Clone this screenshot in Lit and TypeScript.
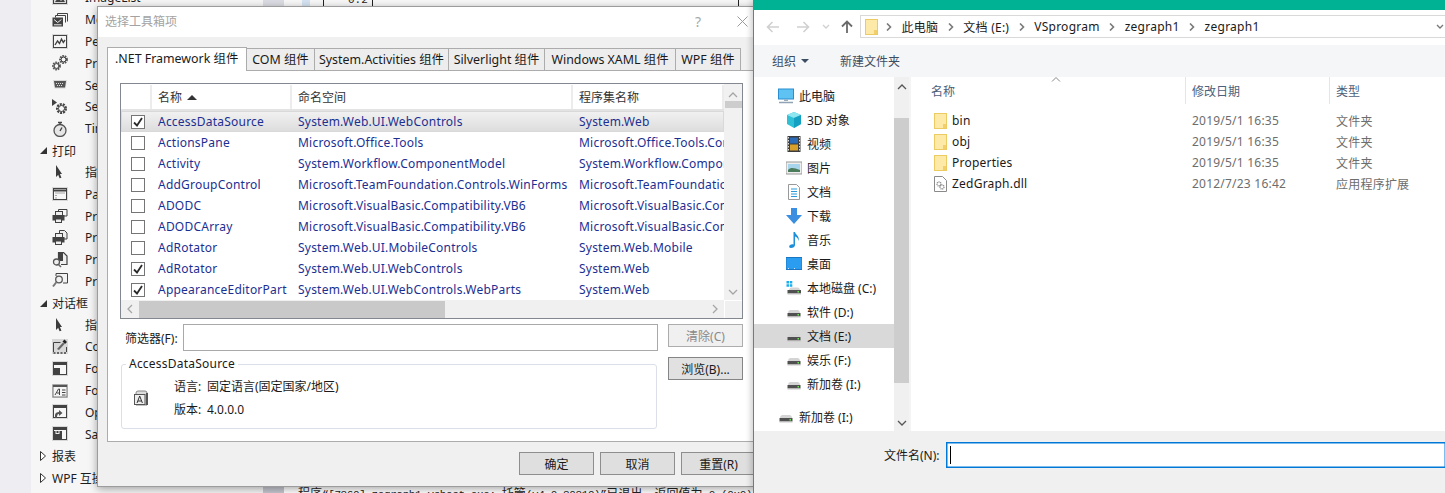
import { LitElement, html, svg, css } from "lit";
import { customElement } from "lit/decorators.js";

const D = "#424242";

const tb: Record<string, () => unknown> = {
  img: () => html`<svg class="ic" width="16" height="16" viewBox="0 0 16 16"><rect width="16" height="14" y="1" fill="#d8d8d8"/><rect x="1.5" y="2.5" width="13" height="11" fill="none" stroke="${D}"/><path d="M3 12l3-4 3 3 2-2 2 3z" fill="${D}"/></svg>`,
  msg: () => html`<svg class="ic" width="16" height="16" viewBox="0 0 16 16"><path d="M5.5 3.500V1.500h10v8M3.500 5.500V3.500h10v7" fill="none" stroke="${D}"/><rect x="0.500" y="5.500" width="10.500" height="9" fill="${D}"/><path d="M2 7.500l3.700 3 3.700-3M2 12.800h7.500" fill="none" stroke="#f0f0f0"/></svg>`,
  perf: () => html`<svg class="ic" width="16" height="16" viewBox="0 0 16 16"><rect width="16" height="15" fill="#d8d8d8"/><rect x="1.500" y="1.500" width="13" height="12" fill="#f5f5f5" stroke="${D}"/><path d="M3 11l2.500-4 2 2.500 2-4.500 1.800 3.500L13 6" fill="none" stroke="${D}" stroke-width="1.400"/></svg>`,
  gears: () => html`<svg class="ic" width="16" height="16" viewBox="0 0 16 16"><circle cx="4.500" cy="11" r="3.400" fill="none" stroke="#555" stroke-width="2" stroke-dasharray="1.600 .8"/><circle cx="4.500" cy="11" r="2.400" fill="none" stroke="${D}"/><circle cx="11.500" cy="4.500" r="3.400" fill="none" stroke="#555" stroke-width="2" stroke-dasharray="1.600 .8"/><circle cx="11.500" cy="4.500" r="2.400" fill="none" stroke="${D}"/></svg>`,
  serial: () => html`<svg class="ic" width="16" height="16" viewBox="0 0 16 16"><path d="M1 3h14l-1.500 8.500h-11z" fill="#d8d8d8"/><path d="M2 4h12l-1 6.500H3z" fill="#555"/><path d="M4 6.500h8M5 8.500h6" stroke="#ddd" stroke-dasharray="1 1"/></svg>`,
  svc: () => html`<svg class="ic" width="16" height="16" viewBox="0 0 16 16"><path d="M0 0l5 3.500L0 7z" fill="${D}"/><circle cx="9.500" cy="9.500" r="4.300" fill="none" stroke="#444" stroke-width="2.400" stroke-dasharray="2 1"/><circle cx="9.500" cy="9.500" r="3" fill="none" stroke="#444"/></svg>`,
  timer: () => html`<svg class="ic" width="16" height="16" viewBox="0 0 16 16"><circle cx="8" cy="9.500" r="6" fill="#e6e6e6" stroke="#555" stroke-width="1.300"/><path d="M6 1.500h4M8 2v2M8 10l2-3.500" stroke="#444" stroke-width="1.400" fill="none"/></svg>`,
  ptr: () => html`<svg class="ic" width="16" height="16" viewBox="0 0 16 16"><path d="M4 1v12l3-3 3 0z" fill="#3c3c3c"/><path d="M6.500 9l2 5" stroke="#3c3c3c" stroke-width="2"/></svg>`,
  page: () => html`<svg class="ic" width="16" height="16" viewBox="0 0 16 16"><rect width="16" height="14" y="1" fill="#d8d8d8"/><rect x="1.500" y="2.500" width="13" height="11" fill="#f6f6f6" stroke="${D}"/><path d="M2 4.500h12" stroke="${D}" stroke-width="2"/><path d="M3.500 7h9M3.500 9.500h1M3.500 12h1" stroke="#555" stroke-dasharray="1 1"/></svg>`,
  pr1: () => html`<svg class="ic" width="16" height="16" viewBox="0 0 16 16"><path d="M6.500 4V1.500h8.500V8H12" fill="none" stroke="${D}"/><rect x="3.500" y="3.500" width="7" height="4" fill="#eee" stroke="${D}"/><rect x="0.500" y="7" width="12" height="5.500" fill="${D}"/><rect x="3.500" y="11" width="6" height="3.500" fill="#eee" stroke="${D}"/></svg>`,
  pr2: () => html`<svg class="ic" width="16" height="16" viewBox="0 0 16 16"><path d="M7.500 4V.5h5l2.500 2.500V9h-3" fill="#eee" stroke="${D}"/><rect x="3.500" y="3.500" width="7" height="4" fill="#eee" stroke="${D}"/><rect x="0.500" y="7" width="12" height="5.500" fill="${D}"/><rect x="3.500" y="11" width="6" height="3.500" fill="#eee" stroke="${D}"/></svg>`,
  pr3: () => html`<svg class="ic" width="16" height="16" viewBox="0 0 16 16"><path d="M6.500 8V.5h5l3.500 3.500v8.500H9" fill="#eee" stroke="${D}" stroke-width="1.200"/><path d="M7 1h4v8H7z" fill="${D}"/><circle cx="4.500" cy="10" r="3" fill="#eee" stroke="#555" stroke-width="1.300"/><path d="M6.500 12.500l2.500 2.500" stroke="#666" stroke-width="1.600"/></svg>`,
  pr4: () => html`<svg class="ic" width="16" height="16" viewBox="0 0 16 16"><path d="M4 3V.5h11.500V10H11" fill="#f2f2f2" stroke="${D}"/><circle cx="7" cy="6.500" r="3.300" fill="#f2f2f2" stroke="#555" stroke-width="1.300"/><path d="M4.500 9L1 13.500" stroke="#777" stroke-width="2"/></svg>`,
  color: () => html`<svg class="ic" width="16" height="16" viewBox="0 0 16 16"><rect width="16" height="15" fill="#d8d8d8"/><path d="M1.500 13V3.500h7M14.500 8v5" fill="none" stroke="${D}"/><path d="M1.500 14h13" stroke="${D}" stroke-width="1.500" stroke-dasharray="2 1.500"/><path d="M5 10l6-6.500L12.500 5 7 11z" fill="#666"/><path d="M10.500 2.500l2-2 2.500 2.500-2 2z" fill="#222"/></svg>`,
  folder: () => html`<svg class="ic" width="16" height="16" viewBox="0 0 16 16"><rect width="16" height="15" fill="#d8d8d8"/><rect x="1.500" y="1.500" width="13" height="12" fill="#f7f7f7" stroke="${D}"/><path d="M1 2h14v2H1zM1 7h7v7H1z" fill="${D}"/></svg>`,
  font: () => html`<svg class="ic" width="16" height="16" viewBox="0 0 16 16"><rect width="16" height="14" y="1" fill="#d8d8d8"/><rect x="1" y="2" width="14" height="12" fill="#f5f5f5" stroke="#777"/><path d="M1 2h14v2H1z" fill="#555"/><path d="M3 12l3.500-6h1v6M5 10h3M10 7h3.500M10 9.500h3.500M10 12h3.500" fill="none" stroke="${D}"/></svg>`,
  open: () => html`<svg class="ic" width="16" height="16" viewBox="0 0 16 16"><rect width="16" height="15" fill="#d8d8d8"/><rect x="1.500" y="1.500" width="13" height="12" fill="#f7f7f7" stroke="${D}"/><path d="M1 2h14v2H1z" fill="${D}"/><path d="M3 14v-3c0-2 2-3 4-3V6l3.500 3L7 12v-2c-1 0-2 .5-2 4z" fill="#555"/></svg>`,
  save: () => html`<svg class="ic" width="16" height="16" viewBox="0 0 16 16"><rect width="16" height="15" fill="#d8d8d8"/><rect x="1.500" y="1.500" width="13" height="12" fill="#f7f7f7" stroke="${D}"/><path d="M1 2h14v2H1z" fill="${D}"/><path d="M1 5h9v9H1z" fill="${D}"/><path d="M3.500 5h1v2h2V5h1v3h-4z" fill="#eee"/></svg>`,
};

const toolbox: [string, string, string?][] = [
  ["i", "ImageList", "img"], ["i", "MessageQueue", "msg"], ["i", "PerformanceCounter", "perf"], ["i", "Process", "gears"],
  ["i", "SerialPort", "serial"], ["i", "ServiceController", "svc"], ["i", "Timer", "timer"],
  ["o", "打印"], ["i", "指针", "ptr"], ["i", "PageSetupDialog", "page"], ["i", "PrintDialog", "pr1"], ["i", "PrintDocument", "pr2"],
  ["i", "PrintPreviewControl", "pr3"], ["i", "PrintPreviewDialog", "pr4"],
  ["o", "对话框"], ["i", "指针", "ptr"], ["i", "ColorDialog", "color"], ["i", "FolderBrowserDialog", "folder"], ["i", "FontDialog", "font"],
  ["i", "OpenFileDialog", "open"], ["i", "SaveFileDialog", "save"],
  ["c", "报表"], ["c", "WPF 互操作性"],
];

const tabs = [".NET Framework 组件", "COM 组件", "System.Activities 组件", "Silverlight 组件", "Windows XAML 组件", "WPF 组件"];

const rows: [boolean, string, string, string][] = [
  [true, "AccessDataSource", "System.Web.UI.WebControls", "System.Web"],
  [false, "ActionsPane", "Microsoft.Office.Tools", "Microsoft.Office.Tools.Common"],
  [false, "Activity", "System.Workflow.ComponentModel", "System.Workflow.ComponentModel"],
  [false, "AddGroupControl", "Microsoft.TeamFoundation.Controls.WinForms", "Microsoft.TeamFoundation.Controls"],
  [false, "ADODC", "Microsoft.VisualBasic.Compatibility.VB6", "Microsoft.VisualBasic.Compatibility"],
  [false, "ADODCArray", "Microsoft.VisualBasic.Compatibility.VB6", "Microsoft.VisualBasic.Compatibility"],
  [false, "AdRotator", "System.Web.UI.MobileControls", "System.Web.Mobile"],
  [true, "AdRotator", "System.Web.UI.WebControls", "System.Web"],
  [true, "AppearanceEditorPart", "System.Web.UI.WebControls.WebParts", "System.Web"],
];

const drive = () => html`<svg class="ic" width="16" height="16" viewBox="0 0 16 16"><path d="M2 9q0-2.500 2-3h8q2 .5 2 3z" fill="#d4d4d4"/><rect x="1.500" y="9" width="13" height="3.500" fill="#505050"/><rect x="1.500" y="12.500" width="13" height="1" fill="#c8c8c8"/><rect x="11.500" y="10" width="1.500" height="1.500" fill="#6fe05a"/></svg>`;
const cdrive = () => html`<svg class="ic" width="16" height="16" viewBox="0 0 16 16"><path d="M.5 1h2.500v2.500H.5zM3.800 1h2.500v2.500H3.800zM.5 4.300h2.500v2.500H.5zM3.800 4.300h2.500v2.500H3.800z" fill="#19aef0"/><path d="M3 10q0-2 2-2.500h7q2 .5 2 2.500z" fill="#d4d4d4"/><rect x="1.500" y="10" width="13.500" height="3.500" fill="#505050"/><rect x="1.500" y="13.500" width="13.500" height="1" fill="#c8c8c8"/><rect x="11.500" y="11" width="1.500" height="1.500" fill="#6fe05a"/></svg>`;

const nav: [string, () => unknown, boolean?, boolean?][] = [
  ["此电脑", () => html`<svg class="ic" width="16" height="16" viewBox="0 0 16 16"><rect x=".5" y="1" width="15" height="10" fill="#5ec3f2" stroke="#2a8ed0"/><path d="M6 11.500h4v1.500H6z" fill="#9ab"/><path d="M1 14.500h14" stroke="#8fa3b5" stroke-width="1.500"/></svg>`, true],
  ["3D 对象", () => html`<svg class="ic" width="16" height="16" viewBox="0 0 16 16"><path d="M8 0l7 3v9l-7 4-7-4V3z" fill="#2fc0d6"/><path d="M8 0l7 3-7 3-7-3z" fill="#8fe6f0"/><path d="M8 6v10l7-4V3z" fill="#13a0c2"/></svg>`],
  ["视频", () => html`<svg class="ic" width="16" height="16" viewBox="0 0 16 16"><rect x="1.500" width="13" height="16" fill="#3d3d3d"/><rect x="4" y="1.500" width="8" height="6" fill="#2c6bb8"/><rect x="4" y="8.500" width="8" height="6" fill="#d9a02c"/><path d="M2.500 1v14M13.500 1v14" stroke="#ddd" stroke-dasharray="1.500 1.500"/></svg>`],
  ["图片", () => html`<svg class="ic" width="16" height="16" viewBox="0 0 16 16"><rect y="2" width="16" height="12" fill="#eee" stroke="#999"/><rect x="2" y="4" width="12" height="8" fill="#a8d4ec"/><path d="M2 10c3-3 6-2 12 0v2H2z" fill="#4d7c5c"/></svg>`],
  ["文档", () => html`<svg class="ic" width="16" height="16" viewBox="0 0 16 16"><path d="M2.500 .5h8l3 3v12h-11z" fill="#fff" stroke="#999"/><path d="M5 5h6M5 7.500h6M5 10h6M5 12.500h6" stroke="#2a9ad8"/></svg>`],
  ["下载", () => html`<svg class="ic" width="16" height="16" viewBox="0 0 16 16"><path d="M5 0h6v7h5l-8 9-8-9h5z" fill="#3a8fe0"/></svg>`],
  ["音乐", () => html`<svg class="ic" width="16" height="16" viewBox="0 0 16 16"><path d="M7.500 0h1.500c.5 3 5 4 3.500 9-.5-3-2-4-3.500-4.500V13c0 2-2 3-4 3s-2.500-2-1-3 2.500-1 3.500-.5z" fill="#1c8fd8"/></svg>`],
  ["桌面", () => html`<svg class="ic" width="16" height="16" viewBox="0 0 16 16"><rect y="1.500" width="16" height="12" fill="#2b9df0" stroke="#1a76c2"/><path d="M2 12.500h12" stroke="#cde" stroke-dasharray="1 5"/></svg>`],
  ["本地磁盘 (C:)", cdrive], ["软件 (D:)", drive], ["文档 (E:)", drive, false, true], ["娱乐 (F:)", drive], ["新加卷 (I:)", drive],
];

const files: [string, string, string, boolean][] = [
  ["bin", "2019/5/1 16:35", "文件夹", true],
  ["obj", "2019/5/1 16:35", "文件夹", true],
  ["Properties", "2019/5/1 16:35", "文件夹", true],
  ["ZedGraph.dll", "2012/7/23 16:42", "应用程序扩展", false],
];

const folderIc = () => html`<svg class="ic" width="13" height="16" viewBox="0 0 13 16"><rect x=".5" y=".5" width="12" height="15" fill="#fde9a8" stroke="#eccb62"/><rect x="9" y="11" width="3" height="4" fill="#f3cf6c"/></svg>`;
const dllIc = () => html`<svg class="ic" width="13" height="16" viewBox="0 0 13 16"><path d="M.5 .5h8l4 4v11H.5z" fill="#fff" stroke="#8a8a8a"/><circle cx="5" cy="8" r="2" fill="none" stroke="#888" stroke-width="1.300" stroke-dasharray="1 .6"/><circle cx="8" cy="11" r="2" fill="none" stroke="#888" stroke-width="1.300" stroke-dasharray="1 .6"/></svg>`;
const crumb = () => html`<svg class="crumb" width="6" height="8" viewBox="0 0 6 8"><path d="M1 .5L4.500 4 1 7.500" fill="none" stroke="#7a7a7a" stroke-width="1.600"/></svg>`;
const chev = (d: string, c = "#a6a6a6") => html`<svg class="ic" width="10" height="8" viewBox="0 0 10 8"><path d=${d} fill="none" stroke=${c} stroke-width="1.300"/></svg>`;

@customElement("tool-box")
class ToolBox extends LitElement {
  static styles = css`
    :host { display: block; font: 12px "Noto Sans", "Noto Sans CJK SC", sans-serif; color: #1e1e1e; }
    .col { display: flex; flex-direction: column; margin-top: -13px; }
    .row { display: flex; align-items: center; height: 21.82px; white-space: nowrap; padding-left: 21px; }
    .ic { flex: none; margin-right: 17px; }
    .hdr { padding-left: 9px; }
    .tri { width: 12px; flex: none; display: flex; }
  `;
  render() {
    return html`<div class="col">${toolbox.map(([k, t, ic]) =>
      k === "i"
        ? html`<div class="row">${tb[ic!]()}<span>${t}</span></div>`
        : html`<div class="row hdr"><span class="tri">${k === "o"
            ? html`<svg width="7" height="7" viewBox="0 0 7 7"><path d="M7 0v7H0z" fill="#333"/></svg>`
            : html`<svg width="6" height="10" viewBox="0 0 6 10"><path d="M.5 .5l5 4.500-5 4.500z" fill="#fff" stroke="#333"/></svg>`}</span><span>${t}</span></div>`
    )}</div>`;
  }
}

@customElement("tool-dialog")
class ToolDialog extends LitElement {
  static styles = css`
    :host { display: flex; flex-direction: column; box-sizing: border-box; width: 657px; height: 481px; background: #f0f0f0; border: 1px solid #9c9c9c;
      box-shadow: 0 2px 8px rgba(0,0,0,.35); font: 12px "Noto Sans", "Noto Sans CJK SC", sans-serif; color: #1a1a1a; overflow: hidden; }
    * { box-sizing: border-box; }
    .title { height: 30px; flex: none; background: #fff; display: flex; align-items: center; padding: 0 0 2px 7px; color: #a3a3a3; font-size: 12px; }
    .title .t { flex: 1; }
    .q { color: #a8a8a8; font-size: 14px; margin-right: 36px; }
    .x { margin-right: 5px; }
    .tabs { height: 33px; flex: none; display: flex; align-items: flex-end; padding-left: 9px; }
    .tab { height: 22px; border: 1px solid #acacac; border-bottom: 0; border-left-width: 0; background: #ededed; display: flex; align-items: center; justify-content: center; white-space: nowrap; font-size: 12.4px; padding-bottom: 1px; }
    .tab.on { height: 24px; background: #fff; border-left-width: 1px; position: relative; top: 1px; justify-content: flex-start; padding: 0 0 4px 7px; z-index: 1; }
    .panel { height: 372px; flex: none; width: 655px; background: #fff; border: 1px solid #acacac; border-right: 0; margin-left: 9px; padding: 12px 0 0 12px; }
    .list { width: 623px; height: 236px; border: 1px solid #828790; display: grid; grid-template-columns: 603px 18px; grid-template-rows: 1fr 18px; }
    .grid { overflow: hidden; }
    .r { display: grid; grid-template-columns: 31px 140px 281px 151px; height: 21px; align-items: center; white-space: nowrap; color: #1b2f92; letter-spacing: .22px; }
    .r > span { overflow: hidden; padding-left: 6px; }
    .head { height: 26px; margin-top: 1px; color: #333; border-bottom: 2px solid #e3e3e3; align-items: stretch; letter-spacing: 0; }
    .head > span { display: flex; align-items: center; border-right: 2px solid #ececec; }
    .head > span:first-child { padding: 0; }
    .sort { margin-left: 5px; }
    .sel { background: linear-gradient(#f2f2f2, #dcdcdc); box-shadow: inset 0 0 0 1px #d9d9d9; }
    .r > .cb { display: flex; justify-content: center; padding-left: 3px; }
    .box { width: 14px; height: 14px; background: #fff; border: 1px solid #757575; display: block; flex: none; }
    .vs { background: #f1f1f1; display: flex; flex-direction: column; align-items: center; }
    .vs .up { height: 17px; padding-top: 7px; display: flex; }
    .vs .th { width: 17px; height: 7px; background: #cdcdcd; }
    .vs .fill { flex: 1; }
    .vs .dn { padding-bottom: 4px; display: flex; }
    .hs { background: #f0f0f0; display: flex; align-items: center; }
    .hs .l { width: 18px; display: flex; justify-content: center; }
    .hs .th { width: 306px; height: 17px; background: #c9c9c9; }
    .hs .m { flex: 1; }
    .hs .rr { width: 18px; display: flex; justify-content: center; }
    .corner { background: #f0f0f0; border-left: 1px solid #fff; border-top: 1px solid #fff; }
    .bot { display: flex; gap: 10px; margin-top: 5px; }
    .left { width: 538px; }
    .filter { display: flex; align-items: center; height: 27px; padding-left: 5px; }
    .filter label { width: 58px; flex: none; }
    .inp { flex: 1; height: 27px; border: 1px solid #a9a9a9; background: #fff; }
    fieldset { margin: 5px 0 0 1px; padding: 0; width: 536px; height: 73px; border: 1px solid #dbe0e8; border-radius: 3px; min-width: 0; }
    legend { margin-left: 4px; padding: 0 3px; line-height: 16px; letter-spacing: .22px; }
    .fs { display: flex; width: 100%; align-items: flex-start; }
    .fs .ai { margin: 18px 0 0 11px; flex: none; }
    .info { margin: 7px 0 0 25px; display: grid; grid-template-columns: 33px auto; row-gap: 7px; line-height: 16px; justify-content: start; align-content: start; }
    .btn { width: 75px; height: 23px; background: #e1e1e1; border: 1px solid #858585; display: flex; align-items: center; justify-content: center; }
    .btn.off { background: #f0f0f0; border-color: #adadad; color: #8a8a8a; }
    .right { display: flex; flex-direction: column; gap: 10px; }
    .foot { display: flex; gap: 6px; padding: 10px 0 0 421px; }
    .foot .btn { flex: none; border-color: #8e8e8e; background: #dfdfdf; }
  `;
  render() {
    const ws = [140, 68, 134, 96, 131, 65];
    return html`
      <div class="title"><span class="t">选择工具箱项</span><span class="q">?</span>
        <svg class="x" width="11" height="11" viewBox="0 0 11 11"><path d="M.5 .5l10 10M10.500 .5l-10 10" stroke="#9a9a9a" fill="none"/></svg></div>
      <div class="tabs">${tabs.map((t, i) => html`<div class="tab ${i === 0 ? "on" : ""}" style="width:${ws[i]}px">${t}</div>`)}</div>
      <div class="panel">
        <div class="list">
          <div class="grid">
            <div class="r head"><span></span><span>名称<svg class="sort" width="10" height="5" viewBox="0 0 10 5"><path d="M5 0l5 5H0z" fill="#333"/></svg></span><span>命名空间</span><span>程序集名称</span></div>
            ${rows.map((r, i) => html`<div class="r ${i === 0 ? "sel" : ""}">
              <span class="cb"><svg class="box" width="14" height="14" viewBox="0 0 12 12">${r[0] ? svg`<path d="M2 6.500l3 3L10 2" fill="none" stroke="#2a2a2a" stroke-width="1.800"/>` : ""}</svg></span>
              <span>${r[1]}</span><span>${r[2]}</span><span>${r[3]}</span></div>`)}
          </div>
          <div class="vs"><div class="up">${chev("M1 6l4-4 4 4")}</div><div class="th"></div><div class="fill"></div><div class="dn">${chev("M1 2l4 4 4-4")}</div></div>
          <div class="hs"><div class="l"><svg width="6" height="10" viewBox="0 0 6 10"><path d="M5 1L1 5l4 4" fill="none" stroke="#a6a6a6" stroke-width="1.300"/></svg></div><div class="th"></div><div class="m"></div>
            <div class="rr"><svg width="6" height="10" viewBox="0 0 6 10"><path d="M1 1l4 4-4 4" fill="none" stroke="#a6a6a6" stroke-width="1.300"/></svg></div></div>
          <div class="corner"></div>
        </div>
        <div class="bot">
          <div class="left">
            <div class="filter"><label>筛选器(F):</label><div class="inp"></div></div>
            <fieldset><legend>AccessDataSource</legend>
              <div class="fs">
                <svg class="ai" width="16" height="16" viewBox="0 0 16 16"><path d="M3 3q0-2 2-2h7q2 0 2 2v12H3z" fill="#ddd" stroke="#888"/><rect x="1.500" y="4.500" width="10.500" height="10" fill="#eee" stroke="#555"/><path d="M4 13l2.700-7 2.700 7M5 11h3.500" fill="none" stroke="#333"/><rect x="13" y="3" width="2" height="12" fill="#555"/></svg>
                <div class="info"><span>语言:</span><span>固定语言(固定国家/地区)</span><span>版本:</span><span>4.0.0.0</span></div>
              </div>
            </fieldset>
          </div>
          <div class="right"><div class="btn off">清除(C)</div><div class="btn">浏览(B)...</div></div>
        </div>
      </div>
      <div class="foot"><div class="btn">确定</div><div class="btn">取消</div><div class="btn">重置(R)</div></div>`;
  }
}

@customElement("file-window")
class FileWindow extends LitElement {
  static styles = css`
    :host { display: flex; flex-direction: column; box-sizing: border-box; width: 692px; height: 493px; background: #fff; border-left: 1px solid #00b294;
      font: 12px "Noto Sans", "Noto Sans CJK SC", sans-serif; color: #1a1a1a; }
    * { box-sizing: border-box; }
    .bar { height: 10px; background: #00b294; flex: none; }
    .navrow { height: 35px; flex: none; display: flex; align-items: center; padding: 0 0 2px 12px; }
    .a { display: flex; flex: none; }
    .a1 { width: 30px; } .a2 { width: 26px; } .a3 { width: 19px; } .a4 { width: 19px; }
    .addr { height: 23px; flex: 1; min-width: 0; border: 1px solid #d9d9d9; border-right: 0; display: flex; align-items: center; padding-left: 4px; letter-spacing: .25px; }
    .addr .ic { margin-right: 8px; flex: none; }
    .addr span { margin: 0 9.500px; white-space: nowrap; }
    .crumb { flex: none; }
    .addr .end { margin-left: auto; margin-right: 1px; }
    .tools { height: 32px; flex: none; background: #f5f6f7; display: flex; align-items: center; padding-left: 18px; color: #3c4d63; }
    .tools .c { margin: 0 31px 0 5px; }
    .main { height: 354px; flex: none; display: flex; }
    .nav { width: 140px; flex: none; padding-top: 7px; }
    .n { display: flex; align-items: center; height: 24px; padding-left: 32px; white-space: nowrap; }
    .n .ic { margin-right: 5px; flex: none; }
    .n.top { padding-left: 24px; }
    .n.on { background: #d9d9d9; }
    .n.gap { margin-top: 9px; }
    .sb { width: 15px; flex: none; background: #f0f0f0; display: flex; flex-direction: column; align-items: center; }
    .sb .up { height: 41px; display: flex; padding-top: 6px; }
    .sb .th { height: 265px; width: 15px; background: #cdcdcd; flex: none; }
    .sb .dn { flex: 1; display: flex; align-items: flex-end; padding-bottom: 4px; }
    .div { width: 3px; flex: none; background: #f4f4f4; border-right: 1px solid #fff; }
    .files { flex: 1; display: flex; flex-direction: column; position: relative; }
    .cols { display: grid; grid-template-columns: 273px 144px 1fr; }
    .fh { height: 27px; color: #4c607a; align-items: center; }
    .fh span { height: 27px; display: flex; align-items: center; padding-left: 6px; border-left: 1px solid #e5e5e5; }
    .fh span:first-child { border: 0; padding-left: 19px; }
    .list { padding-top: 6px; }
    .fr { height: 21px; align-items: center; color: #6d6d6d; letter-spacing: .22px; }
    .fr span { padding-left: 7px; white-space: nowrap; }
    .fr .nm { display: flex; align-items: center; padding-left: 22px; color: #1a1a1a; }
    .fr .nm .ic { margin-right: 5px; }
    .caret { position: absolute; left: 139px; top: 0; }
    .foot { flex: 1; background: #f0f0f0; display: flex; align-items: flex-start; padding: 11px 0 0 130px; }
    .foot label { width: 62px; flex: none; padding-top: 4px; white-space: nowrap; }
    .finp { flex: 1; height: 26px; background: #fff; border: 1px solid #0078d7; border-right: 0; box-shadow: inset 0 0 0 .5px #0078d7; padding: 3px 0 0 3px; }
    .cur { width: 1px; height: 18px; background: #000; }
  `;
  render() {
    const crumbs = ["此电脑", "文档 (E:)", "VSprogram", "zegraph1", "zegraph1"];
    return html`
      <div class="bar"></div>
      <div class="navrow">
        <span class="a a1"><svg width="14" height="12" viewBox="0 0 14 12"><path d="M13 6H2M6.500 1L1.500 6l5 5" fill="none" stroke="#d0d0d0" stroke-width="1.600"/></svg></span>
        <span class="a a2"><svg width="14" height="12" viewBox="0 0 14 12"><path d="M1 6h11M7.500 1l5 5-5 5" fill="none" stroke="#d0d0d0" stroke-width="1.600"/></svg></span>
        <span class="a a3"><svg width="8" height="6" viewBox="0 0 8 6"><path d="M1 1l3 3 3-3" fill="none" stroke="#d0d0d0" stroke-width="1.300"/></svg></span>
        <span class="a a4"><svg width="12" height="13" viewBox="0 0 12 13"><path d="M6 13V2M1 6.500L6 1.500l5 5" fill="none" stroke="#6a6a6a" stroke-width="1.800"/></svg></span>
        <div class="addr">${folderIc()}
          ${crumbs.map((c) => html`${crumb()}<span>${c}</span>`)}
          <svg class="end" width="8" height="6" viewBox="0 0 8 6"><path d="M1 1l3 3 3-3" fill="none" stroke="#777" stroke-width="1.300"/></svg>
        </div>
      </div>
      <div class="tools"><span>组织</span><svg class="c" width="8" height="4" viewBox="0 0 8 4"><path d="M0 0h8L4 4z" fill="#3c4d63"/></svg><span>新建文件夹</span></div>
      <div class="main">
        <div class="nav">${nav.map(([t, ic, top, on]) => html`<div class="n ${top ? "top" : ""} ${on ? "on" : ""}">${ic()}<span>${t}</span></div>`)}
          <div class="n top gap">${drive()}<span>新加卷 (I:)</span></div></div>
        <div class="sb"><div class="up">${chev("M1 6l4-4 4 4", "#555")}</div><div class="th"></div><div class="dn">${chev("M1 2l4 4 4-4", "#555")}</div></div>
        <div class="div"></div>
        <div class="files">
          <svg class="caret" width="10" height="5" viewBox="0 0 10 5"><path d="M1 4.500l4-4 4 4" fill="none" stroke="#888"/></svg>
          <div class="cols fh"><span>名称</span><span>修改日期</span><span>类型</span></div>
          <div class="list">${files.map(([n, d, t, f]) => html`<div class="cols fr"><span class="nm">${f ? folderIc() : dllIc()}${n}</span><span>${d}</span><span>${t}</span></div>`)}</div>
        </div>
      </div>
      <div class="foot"><label>文件名(N):</label><div class="finp"><div class="cur"></div></div></div>`;
  }
}

@customElement("app-root")
class AppRoot extends LitElement {
  static styles = css`
    :host { display: block; position: relative; width: 1445px; height: 493px; overflow: hidden; background: #f5f5f5; }
    * { box-sizing: border-box; }
    .back { position: absolute; inset: 0; display: flex; }
    .gut { width: 31px; background: #eeeef2; flex: none; }
    .tb { width: 232px; flex: none; background: #f6f6f6; overflow: hidden; }
    .split { width: 21px; background: linear-gradient(#dcdce4 0 8px, #f0f0f0 8px 480px, #c6c6d0 480px); flex: none; }
    .code { flex: 1; background: #fff; position: relative; overflow: hidden; }
    .chart { display: flex; height: 6px; background: #f8f8f8; align-items: flex-start; position: relative; }
    .blue { margin-left: 18px; width: 8px; height: 6px; background: #d5e3f2; }
    .chart .v { width: 1px; height: 6px; background: #222; }
    .v1 { margin-left: 13px; }
    .zero { font: 11px "Liberation Mono", monospace; color: #222; margin: -6px 0 0 24px; width: 24px; }
    .v2 { margin-left: 365px; }
    .v3 { margin-left: 14px; background: #888 !important; }
    .out { position: absolute; left: 14px; top: 484px; white-space: nowrap; font: 11px "Liberation Mono", monospace; letter-spacing: -.4px; color: #222; }
    .out b { font: 12px "Noto Sans CJK SC", sans-serif; letter-spacing: 0; }
    .dlg { position: absolute; left: 97px; top: 6px; }
    .fw { position: absolute; left: 753px; top: 0; box-shadow: -2px 0 6px rgba(0,0,0,.2); }
  `;
  render() {
    return html`
      <div class="back">
        <div class="gut"></div>
        <div class="tb"><tool-box></tool-box></div>
        <div class="split"></div>
        <div class="code">
          <div class="chart"><div class="blue"></div><div class="v v1"></div><div class="zero">0.2</div><div class="v"></div><div class="v v2"></div><div class="v v3"></div></div>
          <div class="out"><b>程序</b>“[7360] zegraph1.vshost.exe: <b>托管</b>(v4.0.30319)”<b>已退出，返回值为</b> 0 (0x0)<b>。</b></div>
        </div>
      </div>
      <tool-dialog class="dlg"></tool-dialog>
      <file-window class="fw"></file-window>`;
  }
}
